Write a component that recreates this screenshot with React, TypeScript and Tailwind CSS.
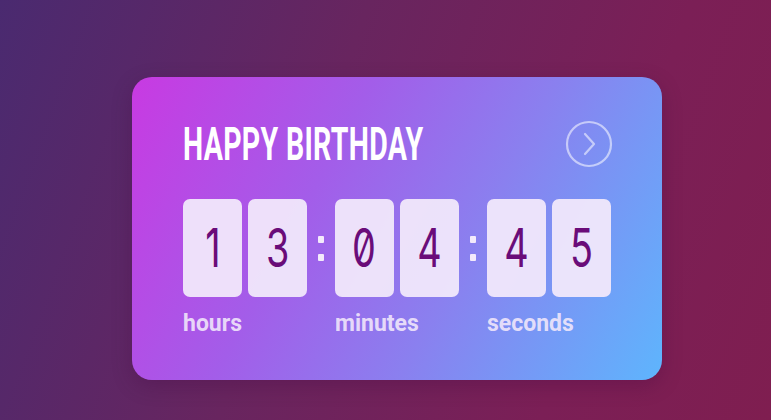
import React from "react";

const groups = [
  { digits: ["1", "3"], label: "hours" },
  { digits: ["0", "4"], label: "minutes" },
  { digits: ["4", "5"], label: "seconds" },
];

function Colon() {
  return (
    <div className="flex h-[98px] w-[28px] flex-col items-center justify-center gap-[11px]">
      <span className="h-[7px] w-[6px] rounded-[1px] bg-[#f3eafb]" />
      <span className="h-[7px] w-[6px] rounded-[1px] bg-[#f3eafb]" />
    </div>
  );
}

function Tile({ digit }: { digit: string }) {
  return (
    <div className="flex h-[98px] w-[59px] items-center justify-center rounded-[7px] bg-[#f1e8fb]/95">
      <span className="inline-block scale-x-[0.7] font-['Inter',sans-serif] text-[54px] font-normal leading-none text-[#6a0c79] slashed-zero">
        {digit}
      </span>
    </div>
  );
}

export default function App() {
  return (
    <div className="h-[420px] w-[771px] overflow-hidden bg-[linear-gradient(110deg,#4a2a70_0%,#68255f_40%,#7b1f56_75%,#7f1e50_100%)] pl-[132px] pt-[77px]">
      <div className="h-[303px] w-[530px] rounded-[20px] bg-[linear-gradient(118deg,#c83ae2_0%,#a35de9_35%,#8a80ef_62%,#5eb5fd_100%)] pl-[51px] pr-[51px] pt-[44px] shadow-[0_6px_20px_rgba(60,0,60,0.25)]">
        <div className="relative flex h-[46px] items-center">
          <h1 className="inline-block origin-left scale-x-[0.62] whitespace-nowrap font-['Roboto',sans-serif] text-[46px] font-bold leading-none tracking-[0.5px] text-white">
            HAPPY BIRTHDAY
          </h1>
          <svg width="48" height="48" viewBox="0 0 48 48" className="absolute right-[-2px] top-[-1px] shrink-0">
            <circle cx="24" cy="24" r="22" fill="none" stroke="rgba(255,255,255,0.55)" strokeWidth="2.2" />
            <path d="M20 14 L29 24 L20 34" fill="none" stroke="rgba(255,255,255,0.55)" strokeWidth="2.2" strokeLinecap="round" strokeLinejoin="round" />
          </svg>
        </div>

        <div className="mt-[32px] flex">
          {groups.map((g, i) => (
            <React.Fragment key={g.label}>
              {i > 0 && <Colon />}
              <div className="flex flex-col">
                <div className="flex gap-[6px]">
                  {g.digits.map((d, j) => (
                    <Tile key={j} digit={d} />
                  ))}
                </div>
                <span className="mt-[14px] font-['Roboto',sans-serif] text-[23px] font-bold leading-[26px] text-[#f2e8fb]/90">
                  {g.label}
                </span>
              </div>
            </React.Fragment>
          ))}
        </div>
      </div>
    </div>
  );
}
